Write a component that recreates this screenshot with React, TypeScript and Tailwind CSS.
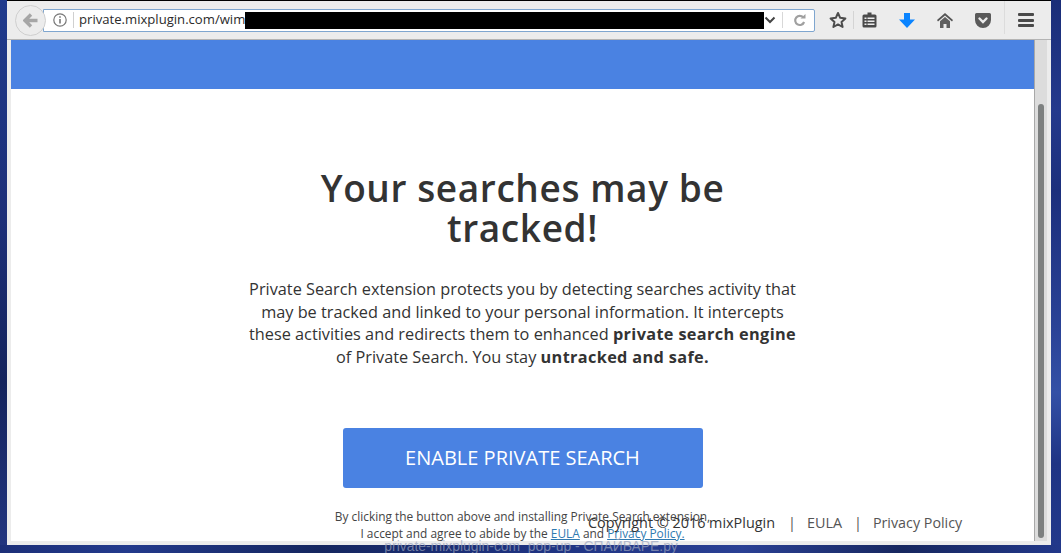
const sans = "font-['Open_Sans',sans-serif]";

function ToolbarIcons() {
  return (
    <div className="flex items-center h-full ml-[8px]">
      <div className="w-[30px] flex justify-center">
        <svg width="18" height="18" viewBox="0 0 18 18">
          <path d="M9 2l2.200 4.800 5.200.6-3.900 3.500 1.100 5.100L9 13.400 4.400 16l1.100-5.100L1.600 7.400l5.200-.6z" fill="none" stroke="#4d4d4d" strokeWidth="2" strokeLinejoin="round" />
        </svg>
      </div>
      <div className="w-px h-[18px] bg-[#d4d4d4]" />
      <div className="w-[30px] flex justify-center">
        <svg width="15" height="16" viewBox="0 0 15 16">
          <path d="M5.500 0.500h4v2H13a1.500 1.500 0 0 1 1.500 1.500v10a1.500 1.500 0 0 1-1.500 1.500H2A1.500 1.500 0 0 1 .5 14V4A1.500 1.500 0 0 1 2 2.500h3.500z" fill="#4a4a4a" />
          <path d="M2.500 5.500h2v1.500h-2zM5.500 5.500h7v1.500h-7zM2.500 8.500h2V10h-2zM5.500 8.500h7V10h-7zM2.500 11.500h2V13h-2zM5.500 11.500h7V13h-7z" fill="#ececec" />
        </svg>
      </div>
      <div className="w-[38px] ml-[4px] flex justify-center">
        <svg width="16" height="15" viewBox="0 0 16 15">
          <path d="M5 0h6v6.500h5L8 15 0 6.500h5z" fill="#0a84ff" />
        </svg>
      </div>
      <div className="w-[38px] flex justify-center">
        <svg width="16" height="15" viewBox="0 0 16 15">
          <path d="M8 0L16 7l-1 1.500L8 2.500 1 8.500 0 7z" fill="#555" />
          <path d="M8 4l5 4.300V15H9.500v-4h-3v4H3V8.300z" fill="#5f5f5f" />
        </svg>
      </div>
      <div className="w-[38px] flex justify-center">
        <svg width="16" height="15" viewBox="0 0 16 15">
          <path d="M1.500 0h13A1.500 1.500 0 0 1 16 1.500V7A8 8 0 0 1 0 7V1.500A1.500 1.500 0 0 1 1.500 0z" fill="#5a5a5a" />
          <path d="M4.500 5.500L8 9l3.500-3.500" fill="none" stroke="#ececec" strokeWidth="2.400" strokeLinecap="round" />
        </svg>
      </div>
      <div className="w-px h-[33px] self-start bg-[#dcdcdc] ml-[2px]" />
      <div className="w-[42px] flex flex-col items-center gap-[2.500px]">
        <div className="w-[16px] h-[3px] rounded-[1px] bg-[#4a4a4a]" />
        <div className="w-[16px] h-[3px] rounded-[1px] bg-[#4a4a4a]" />
        <div className="w-[16px] h-[3px] rounded-[1px] bg-[#4a4a4a]" />
      </div>
    </div>
  );
}

function Toolbar() {
  return (
    <div className="h-[39px] bg-[#ececec] border-b border-[#b4b4b4] flex items-center pl-[8px] shrink-0">
      <div className="relative z-10 w-[31px] h-[31px] rounded-full bg-[#ececec] border border-[#cfcfcf] flex items-center justify-center shrink-0">
        <svg width="15" height="15" viewBox="0 0 15 15">
          <path d="M8 1.500L2 7.500l6 6M3 7.500h11.500" fill="none" stroke="#a6a6a6" strokeWidth="3.400" />
        </svg>
      </div>
      <div className="w-[772px] -ml-[3px] h-[23px] bg-white border border-[#7fa6cf] rounded-r-[2px] flex items-center pl-[9px] text-[#2b2b2b] shrink-0">
        <svg className="shrink-0" width="14" height="14" viewBox="0 0 14 14">
          <circle cx="7" cy="7" r="6.200" fill="none" stroke="#777" strokeWidth="1.200" />
          <path d="M7 6v4.500M7 3.200v1.600" fill="none" stroke="#777" strokeWidth="1.600" />
        </svg>
        <div className="w-px h-[16px] bg-[#d0d0d0] ml-[6px] mr-[5px] shrink-0" />
        <span className={`${sans} text-[13.120px] leading-none whitespace-nowrap shrink-0`}>private.mixplugin.com/wim</span>
        <div className="w-[519px] h-[17px] bg-black shrink-0" />
        <svg className="shrink-0" width="12" height="12" viewBox="0 0 12 12">
          <path d="M1.500 3.500L6 8l4.500-4.500" fill="none" stroke="#444" strokeWidth="2" />
        </svg>
        <div className="w-px h-[16px] bg-[#d8d8d8] ml-[6px] shrink-0" />
        <svg className="ml-[10px] shrink-0" width="13" height="13" viewBox="0 0 12 13">
          <path d="M9.800 3.400A4.600 4.600 0 1 0 10.600 8" fill="none" stroke="#a0a0a0" strokeWidth="2.200" />
          <path d="M7 4.500h5V0z" fill="#a0a0a0" />
        </svg>
      </div>
      <ToolbarIcons />
    </div>
  );
}

function PageContent() {
  return (
    <div className={`relative w-[1023px] bg-white text-[#333] ${sans} flex flex-col items-center shrink-0`}>
      <div className="w-full h-[49px] bg-[#4a82e2] shrink-0" />
      <h1 className="mt-[79px] w-[460px] text-center text-[37px] leading-[40px] font-semibold tracking-[0.600px]">
        Your searches may be tracked!
      </h1>
      <p className="mt-[30px] w-[552px] text-center text-[16.300px] leading-[22.700px]">
        Private Search extension protects you by detecting searches activity that may be tracked and linked to your personal information. It intercepts these activities and redirects them to enhanced <b className="font-bold tracking-[0.350px]">private search engine</b> of Private Search. You stay <b className="font-bold tracking-[0.350px]">untracked and safe.</b>
      </p>
      <button className="mt-[59px] w-[360px] h-[60px] bg-[#4a82e2] rounded-[3px] text-white text-[20px] shrink-0">
        ENABLE PRIVATE SEARCH
      </button>
      <p className="mt-[20px] w-[400px] text-center text-[11.900px] leading-[17px] text-[#444]">
        By clicking the button above and installing Private Search extension,
        <br />I accept and agree to abide by the <a className="text-[#2f7ab0] underline">EULA</a> and <a className="text-[#2f7ab0] underline">Privacy Policy.</a>
      </p>
      <div className="absolute left-[577px] top-[473px] flex items-center text-[14.400px] leading-[20px] whitespace-nowrap">
        <span>Copyright © 2016 mixPlugin</span>
        <span className="ml-[13px] text-[#555]">|</span>
        <span className="ml-[11px] text-[#555]">EULA</span>
        <span className="ml-[12px] text-[#555]">|</span>
        <span className="ml-[11px] text-[14.300px] text-[#555]">Privacy Policy</span>
      </div>
    </div>
  );
}

function Scrollbar() {
  return (
    <div className="w-[13px] bg-[#dcdcdc] border-l border-[#a8a8a8] pt-[64px] pb-[3px] pl-[3px] pr-[3px] shrink-0">
      <div className="h-full rounded-full bg-[#7d8080]" />
    </div>
  );
}

export default function App() {
  return (
    <div className="relative w-[1061px] h-[553px] overflow-hidden flex flex-col">
      <div className="h-[545px] flex shrink-0">
        <div className="w-[7px] bg-[linear-gradient(180deg,#1f3a8c_0%,#1d2f78_40%,#14235c_70%,#22357f_100%)]" />
        <div className="w-[1044px] border-t border-black bg-[#ececec] flex flex-col">
          <Toolbar />
          <div className="flex h-[501px] pl-[4px]">
            <PageContent />
            <Scrollbar />
          </div>
        </div>
        <div className="w-[10px] bg-[linear-gradient(180deg,#1a2d78_0%,#24398c_20%,#1c2f7c_35%,#2a4296_60%,#3350a6_72%,#1f3484_85%,#22388a_100%)]" />
      </div>
      <div className="flex-1 bg-[linear-gradient(95deg,#1c2f78_0%,#233a8c_12%,#15265f_30%,#1e3280_50%,#2a4094_70%,#17275f_85%,#22388a_100%)]" />
      <div className="absolute inset-x-0 top-[539px] text-center pl-[1px] font-['Liberation_Sans',sans-serif] text-[13.900px] leading-[14px] text-[#9aa3bd]/70">
        private-mixplugin-com_pop-up - СПАЙВАРЕ.ру
      </div>
    </div>
  );
}
